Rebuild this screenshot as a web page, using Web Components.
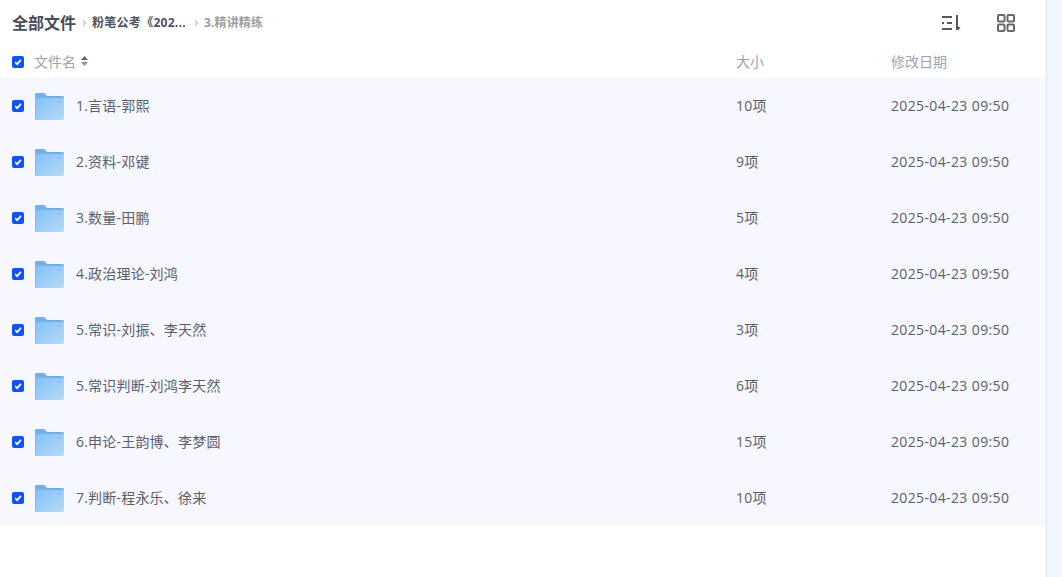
<!DOCTYPE html>
<html lang="zh">
<head>
<meta charset="utf-8">
<title>全部文件</title>
<style>
  html, body { margin: 0; height: 100%; overflow: hidden; background: #fff; }
  body { font-family: "Open Sans", "Noto Sans CJK SC", sans-serif; }
</style>
</head>
<body>
<file-browser>
  <file-toolbar slot="toolbar"></file-toolbar>
  <file-head slot="head"></file-head>
  <file-row name="1.言语-郭熙" size="10项" date="2025-04-23 09:50"></file-row>
  <file-row name="2.资料-邓键" size="9项" date="2025-04-23 09:50"></file-row>
  <file-row name="3.数量-田鹏" size="5项" date="2025-04-23 09:50"></file-row>
  <file-row name="4.政治理论-刘鸿" size="4项" date="2025-04-23 09:50"></file-row>
  <file-row name="5.常识-刘振、李天然" size="3项" date="2025-04-23 09:50"></file-row>
  <file-row name="5.常识判断-刘鸿李天然" size="6项" date="2025-04-23 09:50"></file-row>
  <file-row name="6.申论-王韵博、李梦圆" size="15项" date="2025-04-23 09:50"></file-row>
  <file-row name="7.判断-程永乐、徐来" size="10项" date="2025-04-23 09:50"></file-row>
</file-browser>

<script>
const CHECK = `
  <svg class="check" width="12" height="12" viewBox="0 0 12 12" aria-hidden="true">
    <rect width="12" height="12" rx="2" fill="#0d53ff"/>
    <path d="M3.2 6.2 5.2 8.1 8.9 3.9" fill="none" stroke="#fff" stroke-width="1.8"/>
  </svg>`;

class FileBrowser extends HTMLElement {
  constructor() {
    super();
    this.attachShadow({ mode: 'open' }).innerHTML = `
      <style>
        :host { display: flex; height: 100vh; }
        .main { flex: 1 1 auto; min-width: 0; display: flex; flex-direction: column; }
        .rows { display: flex; flex-direction: column; }
        .rail { flex: 0 0 15px; background: #f1f5fe; border-left: 1px solid #e1e3ea; }
      </style>
      <div class="main">
        <slot name="toolbar"></slot>
        <slot name="head"></slot>
        <div class="rows"><slot></slot></div>
      </div>
      <div class="rail"></div>`;
  }
}

class FileToolbar extends HTMLElement {
  constructor() {
    super();
    this.attachShadow({ mode: 'open' }).innerHTML = `
      <style>
        :host { display: flex; align-items: center; height: 45px; padding: 0 31px 0 12px; color: #424e61; }
        .root { font-size: 16px; font-weight: 700; color: #454d5a; margin-bottom: 2px; }
        .sep { width: 0; height: 0; margin: 0 5px 0 7px; border-style: solid; border-width: 4px 0 4px 4px; border-color: transparent transparent transparent #d6d8dd; }
        .sep.next { margin: 0 5px 0 9px; }
        .crumb { font-size: 12px; font-weight: 700; color: #4b5361; letter-spacing: .28px; margin-bottom: 2px; }
        .crumb.last { color: #9a9fa8; letter-spacing: .15px; }
        .tools { margin-left: auto; display: flex; gap: 36px; align-items: center; }
        svg { display: block; }
      </style>
      <span class="root">全部文件</span>
      <i class="sep"></i>
      <span class="crumb">粉笔公考《202...</span>
      <i class="sep next"></i>
      <span class="crumb last">3.精讲精练</span>
      <div class="tools">
        <svg width="20" height="18" viewBox="0 0 20 18" aria-hidden="true">
          <path d="M1 3h10M1 9h2M6 9h5M1 15h10" stroke="#55585f" stroke-width="2" fill="none"/>
          <path d="M16 1v15" stroke="#55585f" stroke-width="2" fill="none"/>
          <path d="M17 16.500V12.500L19.500 13.500 17 16.500Z" fill="#55585f"/>
        </svg>
        <svg width="18" height="18" viewBox="0 0 18 18" fill="none" stroke="#666a70" stroke-width="2" aria-hidden="true">
          <rect x="1" y="1" width="6.500" height="6.500" rx="1"/>
          <rect x="10.500" y="1" width="6.500" height="6.500" rx="1"/>
          <rect x="1" y="10.500" width="6.500" height="6.500" rx="1"/>
          <rect x="10.500" y="10.500" width="6.500" height="6.500" rx="1"/>
        </svg>
      </div>`;
  }
}

const GRID = `
  :host { display: grid; grid-template-columns: 34px 702px 155px 1fr; align-items: center; padding-left: 0; font-size: 14px; }
  .check { display: block; margin-left: 12px; }
  .cell { margin-bottom: 2px; }
`;

class FileHead extends HTMLElement {
  constructor() {
    super();
    this.attachShadow({ mode: 'open' }).innerHTML = `
      <style>
        ${GRID}
        :host { height: 33px; color: #a0a4aa; }
        .name { display: flex; align-items: center; gap: 5px; }
        svg.sort { display: block; }
      </style>
      ${CHECK}
      <span class="name cell">文件名
        <svg class="sort" width="7" height="10" viewBox="0 0 7 10" aria-hidden="true">
          <path d="M3.500 0 7 4H0Z" fill="#5f6269"/><path d="M0 6h7L3.500 10Z" fill="#8f9299"/>
        </svg>
      </span>
      <span class="cell">大小</span>
      <span class="cell">修改日期</span>`;
  }
}

class FileRow extends HTMLElement {
  constructor() {
    super();
    this.attachShadow({ mode: 'open' }).innerHTML = `
      <style>
        ${GRID}
        :host { height: 56px; background: #f6f7ff; color: #5a5f6b; }
        .name { display: flex; align-items: center; gap: 12px; margin-left: 1px; }
        svg.folder { display: block; margin-top: 1px; }
        #name { letter-spacing: .2px; margin-bottom: 2px; }
        #size { letter-spacing: .3px; }
        #date { letter-spacing: .37px; }
      </style>
      ${CHECK}
      <span class="name">
        <svg class="folder" width="29" height="27" viewBox="0 0 29 27" aria-hidden="true">
          <defs>
            <linearGradient id="f" x1="0" y1="0" x2="1" y2="1">
              <stop offset="0" stop-color="#84c0f5"/><stop offset="1" stop-color="#b4daf9"/>
            </linearGradient>
          </defs>
          <path d="M0 1.500A1.500 1.500 0 0 1 1.500 0H9.500L12 3H27.500A1.500 1.500 0 0 1 29 4.500V8H0Z" fill="#6cb3ee"/>
          <path d="M1 5H28A1 1 0 0 1 29 6V25.500A1.500 1.500 0 0 1 27.500 27H1.500A1.500 1.500 0 0 1 0 25.500V6A1 1 0 0 1 1 5Z" fill="url(#f)"/>
          <rect x="0" y="3" width="1" height="23" fill="#7cbcf3"/>
          <rect x="22" y="8" width="4" height="2" fill="#8fc5f3"/>
        </svg>
        <span id="name"></span>
      </span>
      <span id="size" class="cell"></span>
      <span id="date" class="cell"></span>`;
  }

  connectedCallback() {
    for (const key of ['name', 'size', 'date']) {
      this.shadowRoot.getElementById(key).textContent = this.getAttribute(key);
    }
  }
}

customElements.define('file-browser', FileBrowser);
customElements.define('file-toolbar', FileToolbar);
customElements.define('file-head', FileHead);
customElements.define('file-row', FileRow);
</script>
</body>
</html>
